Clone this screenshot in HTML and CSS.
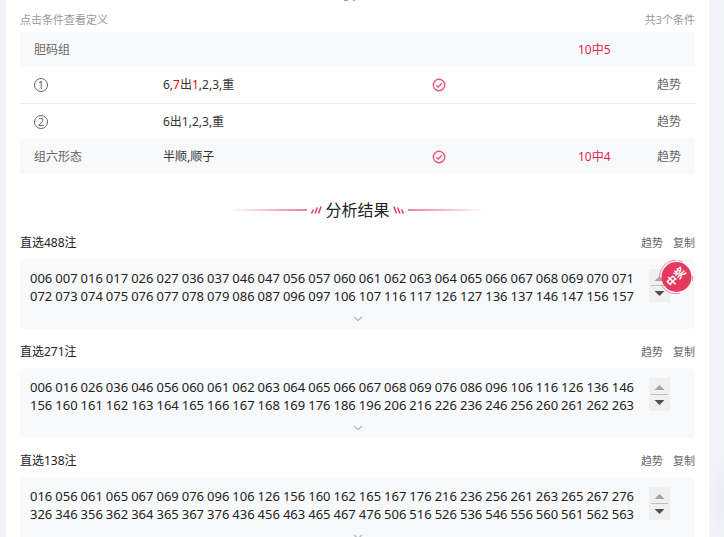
FILE: index.html
```
<!DOCTYPE html>
<html lang="zh-CN">
<head>
  <meta charset="UTF-8">
  <meta name="viewport" content="width=device-width, initial-scale=1.0">
  <title>分析结果</title>
  <link rel="stylesheet" href="styles.css">
</head>
<body>
  <!-- shared icons -->
  <svg class="defs" aria-hidden="true">
    <symbol id="check" viewBox="0 0 14 14">
      <circle cx="7" cy="7" r="5.7" />
      <path d="M4.2 7.2l2 1.9 3.8-3.8" />
    </symbol>
    <symbol id="chevron" viewBox="0 0 10 6">
      <path d="M1 1l4 3.6L9 1" />
    </symbol>
    <symbol id="arrows" viewBox="0 0 21 33">
      <path class="up" d="M10.5 7l5 5h-10z" />
      <path class="split" d="M2 16h17v1H2z" />
      <path class="down" d="M10.5 27l5-5h-10z" />
    </symbol>
  </svg>

  <main class="panel">
    <div class="peek" aria-hidden="true"><i></i><i></i></div>
    <div class="tips">
      <span>点击条件查看定义</span>
      <span>共3个条件</span>
    </div>

    <table class="conditions">
      <tr class="shade">
        <td class="name">胆码组</td>
        <td class="rule"></td>
        <td class="hit"></td>
        <td class="score">10中5</td>
        <td class="more"></td>
      </tr>
      <tr class="line">
        <td class="name"><span class="num">1</span></td>
        <td class="rule">6,<b>7</b>出<b>1</b>,2,3,重</td>
        <td class="hit"><svg class="check"><use href="#check" /></svg></td>
        <td class="score"></td>
        <td class="more"><a href="#">趋势</a></td>
      </tr>
      <tr>
        <td class="name"><span class="num">2</span></td>
        <td class="rule">6出1,2,3,重</td>
        <td class="hit"></td>
        <td class="score"></td>
        <td class="more"><a href="#">趋势</a></td>
      </tr>
      <tr class="shade">
        <td class="name">组六形态</td>
        <td class="rule">半顺,顺子</td>
        <td class="hit"><svg class="check"><use href="#check" /></svg></td>
        <td class="score">10中4</td>
        <td class="more"><a href="#">趋势</a></td>
      </tr>
    </table>

    <div class="heading">
      <span class="bar left"></span>
      <svg class="ticks" viewBox="0 0 12 10"><path d="M1.5 8.5l2-4M5 8.5l2.4-6M8.5 8.5l2.6-7" /></svg>
      <h2>分析结果</h2>
      <svg class="ticks" viewBox="0 0 12 10"><path d="M.9 1.5l2.6 7M4.6 2.5L7 8.5M8.5 4.5l2 4" /></svg>
      <span class="bar right"></span>
    </div>

    <section class="result">
      <header>
        <h3>直选488注</h3>
        <nav><a href="#">趋势</a><a href="#">复制</a></nav>
      </header>
      <div class="box">
        <div class="content">
          <div class="numbers">006 007 016 017 026 027 036 037 046 047 056 057 060 061 062 063 064 065 066 067 068 069 070 071 072 073 074 075 076 077 078 079 086 087 096 097 106 107 116 117 126 127 136 137 146 147 156 157</div>
          <button class="scroll" aria-label="滚动"><svg><use href="#arrows" /></svg></button>
        </div>
        <button class="expand" aria-label="展开"><svg><use href="#chevron" /></svg></button>
        <svg class="badge" viewBox="0 0 36 36">
          <circle class="ring" cx="18" cy="18" r="16.7" />
          <circle class="disc" cx="18.5" cy="18" r="15" />
          <text x="18" y="22" transform="rotate(-45 18 18)">中奖</text>
        </svg>
      </div>
    </section>

    <section class="result">
      <header>
        <h3>直选271注</h3>
        <nav><a href="#">趋势</a><a href="#">复制</a></nav>
      </header>
      <div class="box">
        <div class="content">
          <div class="numbers">006 016 026 036 046 056 060 061 062 063 064 065 066 067 068 069 076 086 096 106 116 126 136 146 156 160 161 162 163 164 165 166 167 168 169 176 186 196 206 216 226 236 246 256 260 261 262 263</div>
          <button class="scroll" aria-label="滚动"><svg><use href="#arrows" /></svg></button>
        </div>
        <button class="expand" aria-label="展开"><svg><use href="#chevron" /></svg></button>
      </div>
    </section>

    <section class="result">
      <header>
        <h3>直选138注</h3>
        <nav><a href="#">趋势</a><a href="#">复制</a></nav>
      </header>
      <div class="box">
        <div class="content">
          <div class="numbers">016 056 061 065 067 069 076 096 106 126 156 160 162 165 167 176 216 236 256 261 263 265 267 276 326 346 356 362 364 365 367 376 436 456 463 465 467 476 506 516 526 536 546 556 560 561 562 563</div>
          <button class="scroll" aria-label="滚动"><svg><use href="#arrows" /></svg></button>
        </div>
        <button class="expand" aria-label="展开"><svg><use href="#chevron" /></svg></button>
      </div>
    </section>
  </main>

  <script>
    // one cell per number so the columns line up
    document.querySelectorAll('.numbers').forEach(function(el) {
      let list = el.textContent.trim().split(' ');
      el.textContent = '';
      list.forEach(function(n) {
        let span = document.createElement('span');
        span.textContent = n;
        el.append(span, ' ');
      });
    });
  </script>
</body>
</html>
```
FILE: styles.css
```
* {
  margin: 0;
  padding: 0;
  box-sizing: border-box;
}

html {
  height: 100%;
  overflow: hidden;
}

body {
  height: 100%;
  padding: 0 15px 0 6px;
  background: radial-gradient(circle at 106% 93%, #dfe5f6 20px, #f2f3f8 60px);
  font-family: "Noto Sans", "Noto Sans CJK SC", sans-serif;
  font-size: 12px;
  line-height: 18px;
  color: #333;
  overflow: hidden;
}

a {
  color: #666;
  text-decoration: none;
}

button {
  border: none;
  background: none;
  cursor: pointer;
}

svg {
  display: block;
}

.defs {
  display: none;
}

.panel {
  min-height: 100%;
  padding: 0 14px;
  background: #fff;
}

/* Bottom edge of the content above */
.peek {
  display: flex;
  justify-content: center;
  gap: 5px;
  height: 11px;
  padding-right: 16px;
}

.peek i {
  width: 4px;
  height: 1px;
  background: linear-gradient(to right, #e09030 50%, #7fb4d8 50%);
}

.peek i:last-child {
  width: 2px;
}

.tips {
  display: flex;
  justify-content: space-between;
  height: 21px;
  font-size: 11px;
  color: #999;
}

/* Conditions */
.conditions {
  width: 100%;
  table-layout: fixed;
  border-collapse: separate;
  border-spacing: 0;
}

.conditions td {
  height: 35px;
}

.conditions .line td {
  height: 37px;
  border-bottom: 1px solid #ebebeb;
}

.conditions .shade {
  background: #f8f9fb;
}

.conditions .name {
  width: 143px;
  padding-left: 14px;
  color: #666;
}

.conditions .rule b {
  font-weight: normal;
  color: #f00;
}

.conditions .hit {
  width: 146px;
}

.conditions .score {
  width: 63px;
  color: #e0204f;
}

.conditions .more {
  width: 54px;
  padding-right: 14px;
  text-align: right;
}

.num {
  display: block;
  width: 14px;
  height: 14px;
  border: 1px solid #666;
  border-radius: 50%;
  font-size: 11px;
  line-height: 12px;
  text-align: center;
}

.check {
  width: 14px;
  height: 14px;
  fill: none;
  stroke: #e8557a;
  stroke-width: 1.4;
}

/* Heading */
.heading {
  display: flex;
  align-items: center;
  justify-content: center;
  gap: 3px;
  height: 24px;
  margin: 24px 0 12px;
}

.heading h2 {
  font-size: 16px;
  font-weight: normal;
  line-height: 24px;
  color: #222;
}

.bar {
  width: 77px;
  height: 2px;
}

.bar.left {
  background: linear-gradient(to right, #fff, #e8829b);
}

.bar.right {
  background: linear-gradient(to left, #fff, #e8829b);
}

.ticks {
  width: 12px;
  height: 10px;
  fill: none;
  stroke: #e0305a;
  stroke-width: 1.4;
}

/* Results */
.result {
  margin-bottom: 14px;
}

.result header {
  display: flex;
  align-items: center;
  justify-content: space-between;
  height: 18px;
  margin-bottom: 7px;
}

.result h3 {
  font-size: 12px;
  font-weight: normal;
  color: #222;
}

.result nav {
  display: flex;
  gap: 10px;
  font-size: 11px;
}

.box {
  position: relative;
  height: 70px;
  padding-top: 10px;
  border-radius: 5px;
  background: #f8f9fb;
}

.content {
  display: flex;
  align-items: flex-start;
  gap: 12px;
  padding: 0 25px 0 10px;
}

.numbers {
  flex: 1;
  display: grid;
  grid-template-columns: repeat(24, 1fr);
  font-size: 13px;
  color: #222;
}

.scroll {
  width: 21px;
  height: 33px;
  background: #f0f0f0;
}

.scroll svg {
  width: 21px;
  height: 33px;
}

.up {
  fill: #a3a3a3;
}

.split {
  fill: #c0c0c0;
}

.down {
  fill: #505050;
}

.expand {
  display: block;
  width: 10px;
  height: 6px;
  margin: 11px auto 0;
}

.expand svg {
  width: 10px;
  height: 6px;
  fill: none;
  stroke: #bbb;
  stroke-width: 1.4;
}

.badge {
  position: absolute;
  top: 0;
  right: 1px;
  width: 36px;
  height: 36px;
}

.badge .ring {
  fill: none;
  stroke: #ee8aa3;
  stroke-dasharray: 4 18 22 4 30 3;
}

.badge .disc {
  fill: #e5395f;
}

.badge text {
  fill: #fff;
  font-size: 11px;
  font-weight: bold;
  text-anchor: middle;
}
```
